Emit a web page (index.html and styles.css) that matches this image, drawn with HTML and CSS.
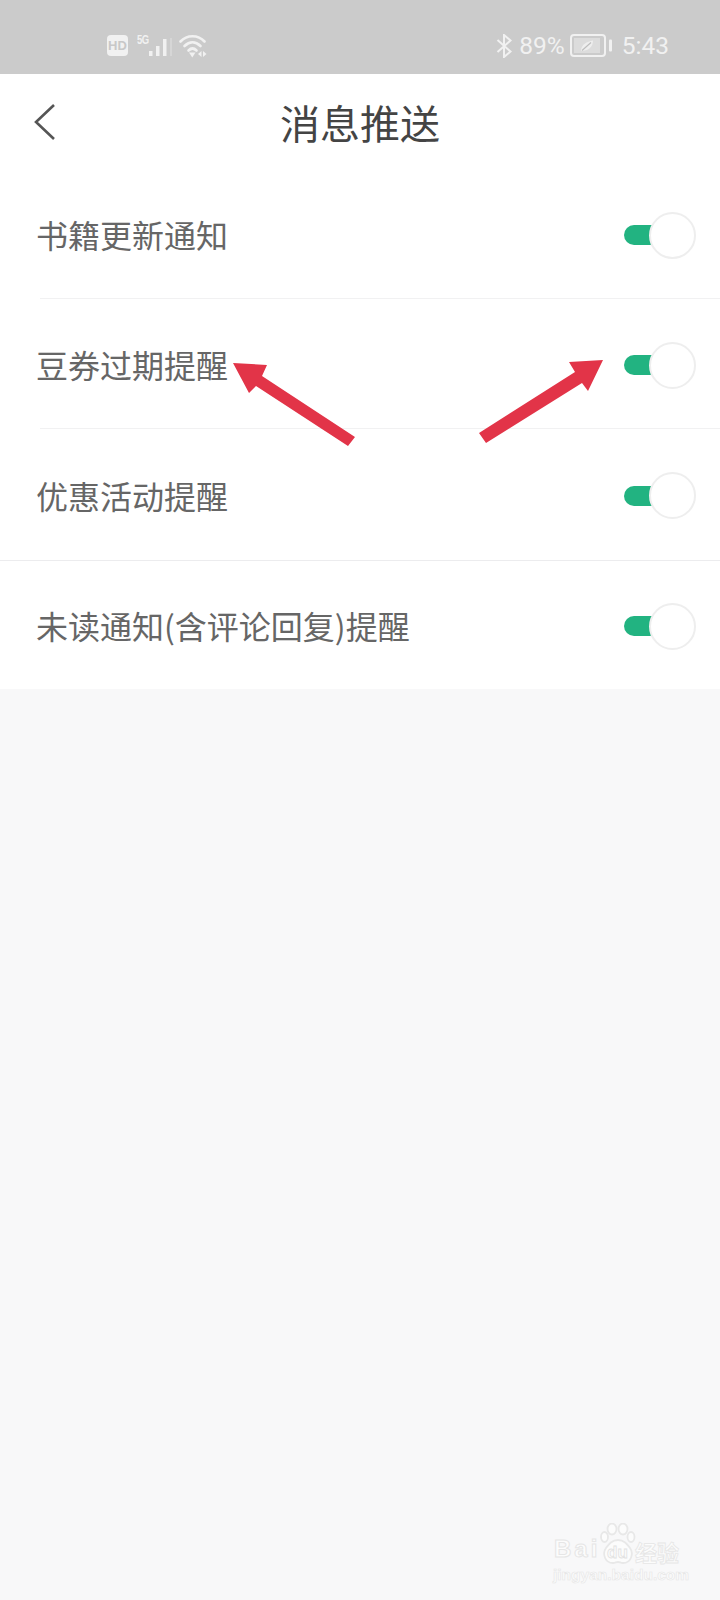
FILE: index.html
```html
<!DOCTYPE html>
<html lang="zh-CN">
<head>
<meta charset="utf-8">
<title>消息推送</title>
<link rel="stylesheet" href="styles.css">
</head>
<body>
<div class="page">
  <header class="status-bar">
    <div class="status-left">
      <span class="hd-badge">HD</span>
      <span class="net-label">5G</span>
      <svg class="signal" width="24" height="18" viewBox="0 0 24 18"><g fill="#f1f1f1"><rect x="0" y="13" width="3.500" height="5"/><rect x="7" y="8" width="3.500" height="10"/><rect x="14" y="1" width="3.500" height="17"/><rect x="21" y="0" width="2" height="18" opacity=".3"/></g></svg>
      <svg class="wifi" width="30" height="24" viewBox="0 0 30 24"><g fill="none" stroke="#f1f1f1" stroke-width="2.600" stroke-linecap="round"><path d="M1.500 7.500C8 .5 19 .5 25.500 7.500"/><path d="M5.500 12C10.500 7 16.500 7 21.500 12"/><path d="M9.500 16.500C12 14 15 14 17.500 16.500"/></g><g fill="#f1f1f1"><path d="M10 18.500h6.500l-3.250 5z"/><path d="M19 20l3.500-3v6z"/><path d="M24 17l3.500 3-3.500 3z"/></g></svg>
    </div>
    <div class="status-right">
      <svg class="bluetooth" width="17" height="24" viewBox="0 0 17 24"><path d="M1.500 6L14.500 17.500 8 23V1L14.500 6.500 1.500 18" fill="none" stroke="#f1f1f1" stroke-width="2"/></svg>
      <span class="pct">89%</span>
      <svg class="battery" width="42" height="23" viewBox="0 0 42 23"><rect x="1" y="1" width="34" height="21" rx="3" fill="none" stroke="#f1f1f1" stroke-width="2"/><rect x="4" y="4" width="26" height="15" fill="#dcdcdc"/><rect x="39" y="5.500" width="3" height="12" rx="1" fill="#f1f1f1"/><path d="M11 17c0-6.500 6-9.500 12-10.500 0 6.500-5 10.500-12 10.500z" fill="#eeeeee"/><path d="M12 16.500L21 8.500" stroke="#bdbdbd" stroke-width="1.200"/></svg>
      <span class="clock">5:43</span>
    </div>
  </header>

  <nav class="nav-bar">
    <svg class="back" width="22" height="38" viewBox="0 0 22 38"><path d="M20 2L2 19l18 17" fill="none" stroke="#555" stroke-width="2.600"/></svg>
    <h1 class="nav-title">消息推送</h1>
  </nav>

  <main class="settings">
    <div class="row row-inset"><span class="row-label">书籍更新通知</span><span class="switch"><span class="track"></span><span class="knob"></span></span></div>
    <div class="row row-inset"><span class="row-label">豆券过期提醒</span><span class="switch"><span class="track"></span><span class="knob"></span></span></div>
    <div class="row row-full"><span class="row-label">优惠活动提醒</span><span class="switch"><span class="track"></span><span class="knob"></span></span></div>
    <div class="row row-last"><span class="row-label">未读通知(含评论回复)提醒</span><span class="switch"><span class="track"></span><span class="knob"></span></span></div>
  </main>

  <svg class="arrows" width="720" height="1600" viewBox="0 0 720 1600">
    <path fill="#e23448" d="M233 363L267 365 262 376 355 437 348 446 256 386 249 393z"/>
    <path fill="#e23448" d="M603 360L569 362 575 372 479 433 486 443 582 383 588 391z"/>
  </svg>

  <div class="watermark">
    <div class="wm-top">
      <span class="wm-bai">Bai</span>
      <span class="wm-mark">
        <svg class="wm-paw" width="36" height="41" viewBox="0 0 36 41"><g fill="#fcfcfc" stroke="#e8e8e8" stroke-width="1.800"><ellipse cx="4.500" cy="14" rx="3.500" ry="5"/><ellipse cx="12" cy="6" rx="4.500" ry="5.500"/><ellipse cx="23" cy="6" rx="4.500" ry="5.500"/><ellipse cx="31" cy="14" rx="3.500" ry="5"/><path d="M18 17c6 0 9 4 12 8 4 6 1 15-7 15-2 0-3.500-1-5-1s-3 1-5 1C5 40 2 31 6 25c3-4 6-8 12-8z"/></g></svg>
        <span class="wm-du">du</span>
      </span>
      <span class="wm-cn">经验</span>
    </div>
    <div class="wm-url">jingyan.baidu.com</div>
  </div>
</div>
</body>
</html>
```

FILE: styles.css
```css
* { box-sizing: border-box; }

html, body { margin: 0; padding: 0; }

body {
  font-family: "Noto Sans CJK SC", "Noto Sans", sans-serif;
  background: #f8f8f9;
}

.page {
  position: relative;
  width: 720px;
  height: 1600px;
  overflow: hidden;
  background: #f8f8f9;
}

/* status bar */
.status-bar {
  height: 74px;
  background: #cbcbcb;
  display: flex;
  justify-content: space-between;
  align-items: center;
  padding: 17px 51px 0 107px;
  color: #f1f1f1;
}

.status-left, .status-right { display: flex; align-items: center; }

.hd-badge {
  width: 21px;
  height: 21px;
  border-radius: 4px;
  background: #f1f1f1;
  color: #c8c8c8;
  font: 700 13px/21px "Liberation Sans", sans-serif;
  text-align: center;
}

.net-label {
  width: 12px;
  margin: -12px 0 0 9px;
  font: 700 9.500px/11px "Liberation Sans", sans-serif;
  letter-spacing: -.5px;
  transform: scaleY(1.3);
}

.signal { margin: 3px 0 0 0; }
.wifi { margin-left: 6px; }

.pct, .clock { font: 400 24.500px/30px Roboto, sans-serif; }

.pct { margin-left: 6px; }
.battery { margin-left: 5px; }
.clock { margin-left: 10px; }

/* navigation */
.nav-bar {
  height: 95px;
  background: #fff;
  display: flex;
  align-items: center;
  justify-content: center;
  position: relative;
}

.back { position: absolute; left: 34px; top: 29px; }

.nav-title {
  margin: 0;
  font-size: 40px;
  font-weight: 400;
  line-height: 56px;
  color: #444;
}

/* rows */
.settings { background: #fff; }

.row {
  height: 130px;
  display: flex;
  align-items: center;
  justify-content: space-between;
  padding: 0 24px 0 36px;
  position: relative;
}

.row-inset::after {
  content: "";
  position: absolute;
  left: 40px;
  right: 0;
  bottom: 0;
  height: 1px;
  background: #f1f1f2;
}

.row-full { border-bottom: 1px solid #ececee; height: 132px; }
.row-last { height: 128px; }

.row-label {
  font-size: 32px;
  line-height: 46px;
  color: #666;
}

.switch {
  position: relative;
  width: 72px;
  height: 47px;
  display: block;
  margin-top: 2px;
}

.track {
  position: absolute;
  left: 0;
  top: 13.500px;
  width: 34px;
  height: 20px;
  border-radius: 10px 0 0 10px;
  background: #22b381;
}

.knob {
  position: absolute;
  right: 0;
  top: 0;
  width: 47px;
  height: 47px;
  border-radius: 50%;
  background: #fff;
  border: 2.500px solid #eeeeee;
}

/* overlays */
.arrows { position: absolute; left: 0; top: 0; pointer-events: none; }

.watermark {
  position: absolute;
  left: 553px;
  top: 1523px;
  width: 132px;
}

.wm-top { display: flex; align-items: flex-end; height: 41px; }

.wm-bai {
  width: 47px;
  padding-left: 1px;
  margin-bottom: 3px;
  font: 700 24px/24px "Liberation Sans", sans-serif;
  letter-spacing: 3px;
  color: #fcfcfc;
  -webkit-text-stroke: 1px #e6e6e6;
}

.wm-mark { position: relative; display: block; width: 36px; height: 41px; }
.wm-paw { display: block; }

.wm-du {
  position: absolute;
  left: 7px;
  top: 20px;
  font: 700 17px/20px "Liberation Sans", sans-serif;
  color: #fcfcfc;
  -webkit-text-stroke: .8px #e2e2e2;
}

.wm-cn {
  margin-left: -1px;
  font: 700 22px/26px "Noto Sans CJK SC", sans-serif;
  color: #fcfcfc;
  -webkit-text-stroke: .8px #e6e6e6;
  white-space: nowrap;
}

.wm-url {
  margin-top: 2px;
  font: 700 15.500px/18px "Liberation Sans", sans-serif;
  color: #fcfcfc;
  -webkit-text-stroke: .6px #e6e6e6;
  white-space: nowrap;
}
```
